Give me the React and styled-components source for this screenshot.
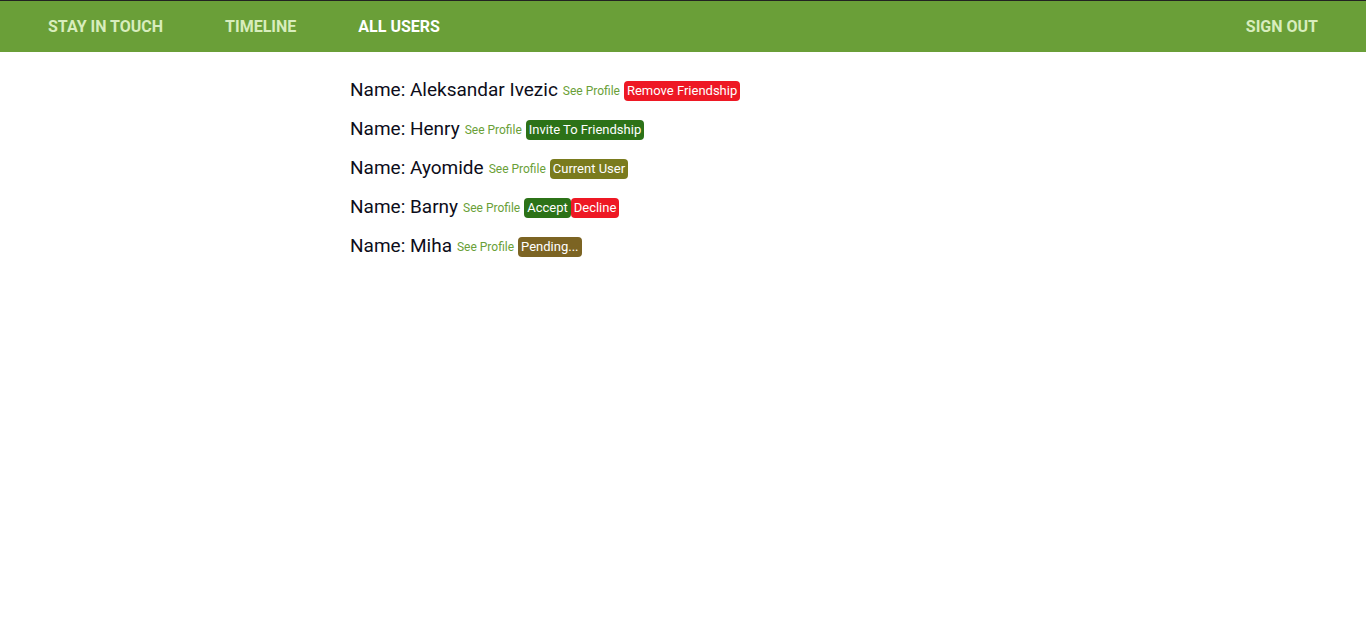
import React from "react";
import styled, { createGlobalStyle } from "styled-components";

const GlobalStyle = createGlobalStyle`
    body {
        margin: 0;
        font-family: Roboto, "Liberation Sans", sans-serif;
        background: #ffffff;
        color: #111111;
    }
`;

const users = [
    { name: "Aleksandar Ivezic", actions: [{ text: "Remove Friendship", kind: "red" }] },
    { name: "Henry", actions: [{ text: "Invite To Friendship", kind: "green" }] },
    { name: "Ayomide", actions: [{ text: "Current User", kind: "olive" }] },
    { name: "Barny", actions: [{ text: "Accept", kind: "green" }, { text: "Decline", kind: "red" }] },
    { name: "Miha", actions: [{ text: "Pending...", kind: "brown" }] },
];

const colors = {
    red: "#ee1824",
    green: "#2c7218",
    olive: "#7a7b1e",
    brown: "#7c6423",
};

const App = () => {
    return (
        <>
            <GlobalStyle />
            <NavBar>
                <NavGroup>
                    <NavLink href="#">Stay in touch</NavLink>
                    <NavLink href="#">Timeline</NavLink>
                    <NavLink href="#" active>All users</NavLink>
                </NavGroup>
                <NavGroup>
                    <NavLink href="#">Sign out</NavLink>
                </NavGroup>
            </NavBar>
            <UserList>
                {users.map((u) => (
                    <UserRow key={u.name}>
                        <Name>Name: {u.name}</Name>
                        <ProfileLink href="#">See Profile</ProfileLink>
                        <Actions>
                            {u.actions.map((a) => (
                                <Badge key={a.text} kind={a.kind}>{a.text}</Badge>
                            ))}
                        </Actions>
                    </UserRow>
                ))}
            </UserList>
        </>
    );
};

export default App;

const NavBar = styled.nav`
    display: flex;
    justify-content: space-between;
    align-items: center;
    height: 51px;
    padding: 0 17px;
    background: #6a9f38;
    border-top: 1px solid #222222;
`;

const NavGroup = styled.div`
    display: flex;
    align-items: center;
`;

const NavLink = styled.a`
    padding: 0 31px;
    font-size: 16px;
    font-weight: 700;
    text-transform: uppercase;
    text-decoration: none;
    color: ${(p) => (p.active ? "#ffffff" : "#d8edbd")};
`;

const UserList = styled.ul`
    list-style: none;
    margin: 0;
    padding: 18px 0 0 350px;
`;

const UserRow = styled.li`
    display: flex;
    align-items: center;
    gap: 4px;
    height: 39px;
`;

const Name = styled.span`
    font-size: 19px;
    color: #0d0d1a;
`;

const ProfileLink = styled.a`
    margin-left: 1px;
    margin-top: 3px;
    font-size: 12px;
    color: #6a9f38;
    text-decoration: none;
`;

const Actions = styled.span`
    display: flex;
    margin-top: 3px;
`;

const Badge = styled.span`
    padding: 2px 3px;
    border-radius: 4px;
    font-size: 13px;
    line-height: 16px;
    color: #ffffff;
    background: ${(p) => colors[p.kind]};
`;
